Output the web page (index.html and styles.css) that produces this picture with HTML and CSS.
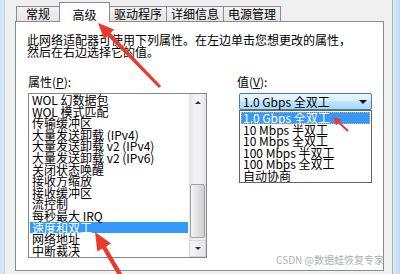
FILE: index.html
```html
<!DOCTYPE html>
<html lang="zh-CN">
<head>
    <meta charset="UTF-8">
    <meta name="viewport" content="width=device-width, initial-scale=1.0">
    <title>网络适配器属性 - 高级</title>
    <link rel="stylesheet" href="styles.css">
</head>
<body>
    <div class="window">
        <div class="frame frame-left"></div>
        <div class="dialog">
            <div class="tabs">
                <div class="tab">常规</div>
                <div class="tab active">高级</div>
                <div class="tab">驱动程序</div>
                <div class="tab">详细信息</div>
                <div class="tab">电源管理</div>
            </div>
            <div class="panel">
                <p class="intro">此网络适配器可使用下列属性。在左边单击您想更改的属性，<br>然后在右边选择它的值。</p>
                <div class="fields">
                    <div class="field-props">
                        <div class="label">属性(<u>P</u>):</div>
                        <div class="listbox">
                            <ul class="items">
                                <li>WOL 幻数据包</li>
                                <li>WOL 模式匹配</li>
                                <li>传输缓冲区</li>
                                <li>大量发送卸载 (IPv4)</li>
                                <li>大量发送卸载 v2 (IPv4)</li>
                                <li>大量发送卸载 v2 (IPv6)</li>
                                <li>关闭状态唤醒</li>
                                <li>接收方缩放</li>
                                <li>接收缓冲区</li>
                                <li>流控制</li>
                                <li>每秒最大 IRQ</li>
                                <li class="selected">速度和双工</li>
                                <li>网络地址</li>
                                <li>中断裁决</li>
                            </ul>
                            <div class="scrollbar">
                                <div class="sb-btn"><span class="tri-up"></span></div>
                                <div class="sb-track"></div>
                                <div class="sb-thumb"></div>
                                <div class="sb-btn sb-down"><span class="tri-down"></span></div>
                            </div>
                        </div>
                    </div>
                    <div class="field-value">
                        <div class="label">值(<u>V</u>):</div>
                        <div class="combo">
                            <span>1.0 Gbps 全双工</span>
                            <span class="combo-arrow"></span>
                        </div>
                        <ul class="dropdown">
                            <li class="selected">1.0 Gbps 全双工</li>
                            <li>10 Mbps 半双工</li>
                            <li>10 Mbps 全双工</li>
                            <li>100 Mbps 半双工</li>
                            <li>100 Mbps 全双工</li>
                            <li>自动协商</li>
                        </ul>
                    </div>
                </div>
            </div>
        </div>
        <div class="frame frame-right"></div>
    </div>

    <!-- red callout arrows drawn over the dialog -->
    <svg class="arrows" width="400" height="274" viewBox="0 0 400 274">
        <polygon points="98,23 114.2,29.6 110.6,33.1 161.1,86 158.9,88 107.8,35.9 104.2,39.4"/>
        <polygon points="95,232 111.1,243.4 106.1,246.4 123.9,276.9 120.1,279.1 102.3,248.6 97.3,251.6"/>
        <polygon points="333,117 341.6,119.5 339.5,121.7 348.7,130.3 347.3,131.7 338.2,123.2 336.1,125.4"/>
    </svg>

    <div class="watermark">CSDN @数据蛙恢复专家</div>
</body>
</html>
```

FILE: styles.css
```css
body {
    margin: 0;
    width: 400px;
    height: 274px;
    overflow: hidden;
    position: relative;
    background-color: #f0f0f0;
    font-family: "Noto Sans CJK SC", sans-serif;
    font-size: 12px;
    color: #000;
}

.window {
    display: flex;
    width: 400px;
    height: 274px;
}

.frame-left {
    width: 4px;
    background-color: #d7e6f5;
    border-right: 1px solid #c4d3e2;
}

.frame-right {
    width: 7px;
    background: linear-gradient(to right, #dbe8f6, #c3d9f0);
    border-left: 1px solid #a7b2bf;
}

.dialog {
    flex: 1;
    display: flex;
    flex-direction: column;
    padding: 2px 8px 3px 10px;
}

.tabs {
    display: flex;
    align-items: flex-end;
    height: 20px;
    margin-left: 1px;
    margin-bottom: -1px;
    position: relative;
    z-index: 1;
}

.tab {
    box-sizing: border-box;
    height: 15px;
    min-width: 44px;
    margin-bottom: 1px;
    padding: 0 4px;
    border: 1px solid #898c95;
    border-bottom: none;
    background: linear-gradient(#f3f3f3, #e5e5e5);
    line-height: 13px;
    text-align: center;
}

.tab + .tab {
    margin-left: -1px;
}

.tab.active {
    height: 20px;
    min-width: 51px;
    margin-bottom: 0;
    padding-top: 5px;
    background: #fff;
    position: relative;
}

.panel {
    flex: 1;
    border: 1px solid #898c95;
    background-color: #fff;
    padding: 12px 0 0 11px;
}

.intro {
    margin: 0;
    line-height: 12px;
}

.fields {
    display: flex;
    margin-top: 18px;
}

.field-props {
    width: 179px;
    margin-left: 1px;
}

.field-value {
    width: 136px;
    margin-left: 30px;
}

.label {
    line-height: 12px;
    margin-bottom: 5px;
}

.label u {
    text-decoration: underline;
}

.listbox {
    box-sizing: border-box;
    height: 165px;
    display: flex;
    border: 1px solid #828790;
}

.items {
    flex: 1;
    list-style: none;
    margin: 0;
    padding: 0 1px;
    line-height: 11.6px;
    white-space: nowrap;
}

.items li {
    padding-left: 2px;
}

.items li.selected,
.dropdown li.selected {
    background-color: #3399ff;
    color: #fff;
}

.scrollbar {
    width: 17px;
    display: flex;
    flex-direction: column;
    background: linear-gradient(to right, #e3e3e3, #f2f2f2 30%, #f2f2f2 70%, #e3e3e3);
}

.sb-btn {
    height: 17px;
    display: flex;
    align-items: center;
    justify-content: center;
}

.sb-down {
    box-sizing: border-box;
    border: 1px solid #d5d5d5;
    background: linear-gradient(to right, #f5f5f5, #e6e6e6);
}

.sb-track {
    height: 72px;
}

.sb-thumb {
    flex: 1;
    margin: 1px 1px 2px;
    border: 1px solid #a2a2a2;
    border-radius: 2px;
    background: linear-gradient(to right, #f4f4f4, #e2e2e2 50%, #d0d0d0);
}

.tri-up {
    border-left: 3px solid transparent;
    border-right: 3px solid transparent;
    border-bottom: 3px solid #333;
}

.tri-down {
    border-left: 3px solid transparent;
    border-right: 3px solid transparent;
    border-top: 3px solid #333;
}

.combo {
    box-sizing: border-box;
    width: 133px;
    height: 17px;
    margin-left: 2px;
    padding: 0 4px 0 3px;
    display: flex;
    align-items: center;
    justify-content: space-between;
    border: 1px solid #3c7fb1;
    border-radius: 2px;
    background: linear-gradient(#eaf6fd, #d9f0fc 45%, #bee6fd 50%, #a7d9f5);
    line-height: 15px;
}

.combo-arrow {
    border-left: 4px solid transparent;
    border-right: 4px solid transparent;
    border-top: 4px solid #000;
}

.dropdown {
    box-sizing: border-box;
    width: 133px;
    height: 73px;
    margin: 0 0 0 2px;
    padding: 1px 1px 0;
    list-style: none;
    border: 1px solid #646464;
    background-color: #fff;
    line-height: 11.6px;
    white-space: nowrap;
}

.dropdown li {
    padding-left: 2px;
}

.dropdown li.selected {
    outline: 1px dotted #f2a33a;
    outline-offset: -1px;
}

.arrows {
    position: absolute;
    left: 0;
    top: 0;
    fill: #e63b2e;
}

.watermark {
    position: absolute;
    right: 16px;
    top: 254px;
    font-size: 10px;
    line-height: 12px;
    color: #aab0b6;
}
```
